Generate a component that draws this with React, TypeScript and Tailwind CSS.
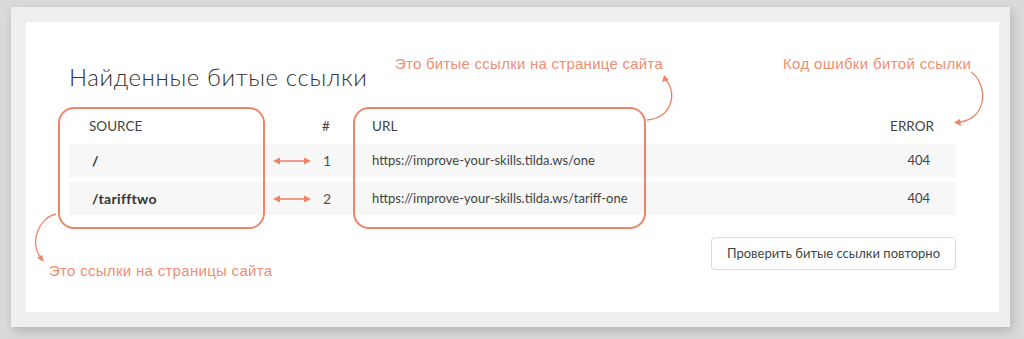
import React from "react";

const ORANGE = "#ee8569";

function DoubleArrow() {
  return (
    <svg width="40" height="10" viewBox="0 0 40 10" className="ml-auto mr-[10px]">
      <line x1="4" y1="5" x2="36" y2="5" stroke={ORANGE} strokeWidth="1.6" />
      <path d="M1 5 L8 1.5 L8 8.5 Z" fill={ORANGE} />
      <path d="M39 5 L32 1.5 L32 8.5 Z" fill={ORANGE} />
    </svg>
  );
}

const rows = [
  { src: "/", n: "1", url: "https://improve-your-skills.tilda.ws/one", err: "404" },
  { src: "/tarifftwo", n: "2", url: "https://improve-your-skills.tilda.ws/tariff-one", err: "404" },
];

export default function App() {
  const ui = { fontFamily: "Lato, 'Noto Sans', sans-serif" };
  const note = { fontFamily: "'Liberation Sans', Arial, sans-serif" };
  return (
    <div className="w-[1024px] h-[339px] bg-[#dadada] pt-[7px] pl-[11px]" style={ui}>
      <div className="w-[999px] h-[320px] bg-[#efefef] pt-[15px] pl-[15px] shadow-[2px_4px_10px_rgba(0,0,0,0.18)]">
        <div className="relative w-[973px] h-[290px] bg-white pt-[38px] pl-[43px]">
          <h1 className="text-[24px] font-light text-[#333] leading-[34px] tracking-[0.6px]">
            Найденные битые ссылки
          </h1>
          <div className="w-[887px] mt-[17px]">
            <div className="flex items-center h-[30px] text-[13.5px] text-[#444]">
              <div className="w-[253px] pl-[20px]">SOURCE</div>
              <div className="w-[50px]">#</div>
              <div className="flex-1">URL</div>
              <div className="pr-[22px]">ERROR</div>
            </div>
            <div className="flex flex-col gap-[5px] mt-[3px]">
              {rows.map((r) => (
                <div key={r.n} className="flex items-center h-[33px] bg-[#f7f7f7] text-[13px] text-[#333]">
                  <div className="w-[253px] pl-[23px] flex items-center">
                    <span className="font-bold text-[14px] tracking-[0.3px]">{r.src}</span>
                    <DoubleArrow />
                  </div>
                  <div className="w-[50px] pl-[1px] text-[#555] text-[14px]">{r.n}</div>
                  <div className="flex-1 text-[13px] text-[#444]">{r.url}</div>
                  <div className="pr-[26px] text-[#444]">{r.err}</div>
                </div>
              ))}
            </div>
            <div className="flex justify-end mt-[22px]">
              <button className="w-[245px] h-[33px] border border-[#dcdcdc] rounded-[4px] bg-white text-[13px] text-[#3b4743]">
                Проверить битые ссылки повторно
              </button>
            </div>
          </div>

          {/* highlight boxes */}
          <div className="absolute left-[32px] top-[85px] w-[207px] h-[122px] border-2 border-[#ee8569] rounded-[16px]" />
          <div className="absolute left-[327px] top-[85px] w-[293px] h-[122px] border-2 border-[#ee8569] rounded-[16px]" />

          {/* annotations */}
          <div className="absolute left-[369px] top-[31px] text-[15px] tracking-[0.25px] text-[#f08e73]" style={note}>
            Это битые ссылки на странице сайта
          </div>
          <div className="absolute left-[757px] top-[31px] text-[15px] tracking-[0.35px] text-[#f08e73]" style={note}>
            Код ошибки битой ссылки
          </div>
          <div className="absolute left-[23px] top-[238px] text-[15px] tracking-[0.3px] text-[#f08e73]" style={note}>
            Это ссылки на страницы сайта
          </div>

          <svg className="absolute left-0 top-0 pointer-events-none" width="973" height="290" viewBox="0 0 973 290">
            <g stroke={ORANGE} strokeWidth="1.3" fill="none">
              <path d="M621 98 C 645 96, 652 72, 640 58" />
              <path d="M945 50 C 962 62, 962 96, 934 100" />
              <path d="M30 192 C 12 196, 3 222, 15 236" />
            </g>
            <g fill={ORANGE}>
              <path d="M638 53 L636 60 L643 58 Z" />
              <path d="M928 100.5 L934 97 L935 104 Z" />
              <path d="M18 240 L11 236 L16 233 Z" />
            </g>
          </svg>
        </div>
      </div>
    </div>
  );
}
